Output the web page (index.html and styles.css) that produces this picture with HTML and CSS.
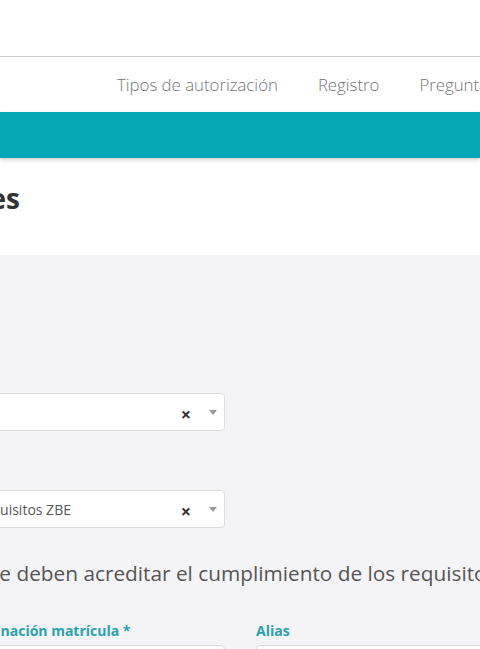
FILE: index.html
```html
<!DOCTYPE html>
<html lang="es">
    <head>
        <meta charset="utf-8">
        <title>Autorizaciones</title>
        <link rel="stylesheet" href="styles.css">
    </head>
    <body>
        <header class="topbar"></header>
        <nav class="mainnav">
            <ul>
                <li><a href="#">Tipos de autorización</a></li>
                <li><a href="#">Registro</a></li>
                <li><a href="#">Preguntas frecuentes</a></li>
                <li><a href="#">Contacto</a></li>
            </ul>
        </nav>
        <div class="band"></div>
        <section class="titlebar">
            <div class="title-box">
                <h1>Autorizaciones</h1>
            </div>
        </section>
        <main class="content">
            <div class="container">
                <div class="field">
                    <label class="hidden-label">Tipo</label>
                    <div class="select">
                        <span class="select-value"></span>
                        <span class="select-clear">&times;</span>
                        <span class="select-arrow"></span>
                    </div>
                </div>
                <div class="field field-last">
                    <label class="hidden-label">Motivo</label>
                    <div class="select">
                        <span class="select-value">Requisitos ZBE</span>
                        <span class="select-clear">&times;</span>
                        <span class="select-arrow"></span>
                    </div>
                </div>
                <p class="lead">Vehículos que deben acreditar el cumplimiento de los requisitos ZBE</p>
                <div class="row">
                    <div class="col">
                        <label class="form-label label-shift">Denominación matrícula *</label>
                        <input type="text" class="form-input">
                    </div>
                    <div class="col">
                        <label class="form-label">Alias</label>
                        <input type="text" class="form-input">
                    </div>
                </div>
            </div>
        </main>
    </body>
</html>
```

FILE: styles.css
```css
html, body {
    margin: 0;
    padding: 0;
    overflow: hidden;
}
body {
    font-family: "Open Sans", "Liberation Sans", sans-serif;
    background-color: #f4f4f6;
    color: #555;
}
.topbar {
    height: 56px;
    background-color: #fff;
    border-bottom: 1px solid #cbcbcb;
}
.mainnav {
    height: 55px;
    background-color: #fff;
}
.mainnav ul {
    list-style: none;
    margin: 0;
    padding: 0 0 0 97px;
    display: flex;
    height: 100%;
    align-items: center;
    white-space: nowrap;
}
.mainnav a {
    display: block;
    padding: 0 20px;
    font-size: 16.8px;
    font-weight: 300;
    color: #757575;
    text-decoration: none;
}
.band {
    height: 46px;
    background-color: #04a7b4;
    box-shadow: 0 2px 4px rgba(0, 0, 0, 0.18);
    position: relative;
}
.titlebar {
    height: 97px;
    box-sizing: border-box;
    padding-bottom: 18px;
    background-color: #fff;
    display: flex;
    align-items: center;
}
.title-box {
    width: 20px;
    display: flex;
    justify-content: flex-end;
}
.title-box h1 {
    margin: 0;
    font-size: 28px;
    font-weight: 700;
    color: #333;
    white-space: nowrap;
}
.content {
    padding-top: 138px;
}
.container {
    margin-left: -50px;
    width: 900px;
}
.field {
    width: 275px;
    margin-bottom: 59px;
}
.field-last {
    margin-bottom: 31px;
}
.hidden-label {
    display: none;
}
.select {
    height: 36px;
    background-color: #fff;
    border: 1px solid #dcdcdc;
    border-radius: 4px;
    display: flex;
    align-items: center;
    padding-left: 24px;
    font-size: 14px;
    color: #555;
}
.select-value {
    flex: 1;
    white-space: nowrap;
}
.select-clear {
    font-size: 18px;
    font-weight: 700;
    color: #333;
    width: 20px;
    text-align: center;
    margin-top: 4px;
}
.select-arrow {
    width: 0;
    height: 0;
    border-left: 4px solid transparent;
    border-right: 4px solid transparent;
    border-top: 5px solid #999;
    margin: 0 7px 0 13px;
}
.lead {
    margin: 0 0 0 -74px;
    font-size: 20.8px;
    line-height: 28px;
    white-space: nowrap;
    color: #555;
}
.row {
    display: flex;
    gap: 31px;
    margin-top: 34px;
}
.col {
    width: 275px;
    display: flex;
    flex-direction: column;
}
.form-label {
    font-size: 14px;
    font-weight: 700;
    color: #2ba2ab;
    white-space: nowrap;
    margin-bottom: 5px;
}
.label-shift {
    margin-left: -4px;
}
.form-input {
    height: 36px;
    border: 1px solid #dcdcdc;
    border-radius: 4px;
    background-color: #fff;
    box-sizing: border-box;
}
```
